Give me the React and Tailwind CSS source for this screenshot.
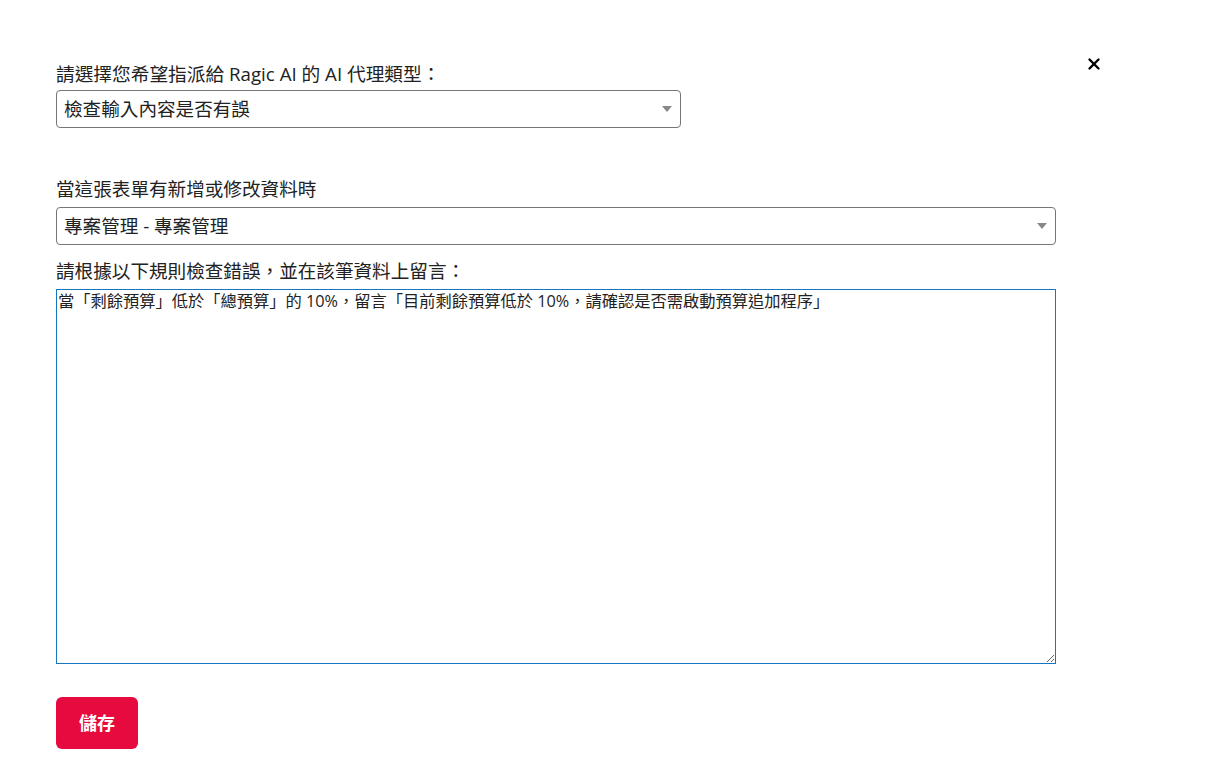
import { X } from 'lucide-react';

const font = { fontFamily: '"Open Sans", "Noto Sans CJK TC", sans-serif' };

function Caret() {
  return (
    <svg width="10" height="6" viewBox="0 0 10 6" className="shrink-0">
      <path d="M0 0 H10 L5 6 Z" fill="#888" />
    </svg>
  );
}

function FakeSelect({ value, className }) {
  return (
    <div
      className={`flex items-center justify-between h-[38px] pl-[7px] pr-[8px] border border-[#767676] rounded-[4px] bg-white text-[18.6px] text-[#222] ${className}`}
    >
      <span className="leading-none">{value}</span>
      <Caret />
    </div>
  );
}

export default function App() {
  return (
    <div className="relative w-[1228px] h-[765px] bg-white text-[#222]" style={font}>
      {/* close */}
      <button className="absolute left-[1085px] top-[55px] text-black">
        <X size={18} strokeWidth={3.2} />
      </button>

      <div className="pl-[56px] pt-[63px] flex flex-col">
        <label className="text-[18.7px] leading-[22px]">請選擇您希望指派給 Ragic AI 的 AI 代理類型：</label>
        <FakeSelect value="檢查輸入內容是否有誤" className="mt-[5px] w-[625px]" />

        <label className="mt-[50px] text-[18.6px] leading-[22px]">當這張表單有新增或修改資料時</label>
        <FakeSelect value="專案管理 - 專案管理" className="mt-[7px] w-[1000px]" />

        <label className="mt-[15px] text-[18.6px] leading-[22px]">請根據以下規則檢查錯誤，並在該筆資料上留言：</label>
        <textarea
          className="mt-[7px] w-[1000px] h-[375px] border border-[#1677c0] px-[1px] py-[1px] text-[16.25px] leading-[20px] text-[#222] outline-none resize"
          style={font}
          defaultValue="當「剩餘預算」低於「總預算」的 10%，留言「目前剩餘預算低於 10%，請確認是否需啟動預算追加程序」"
        />

        <div className="mt-[33px]">
          <button className="w-[82px] h-[52px] rounded-[6px] bg-[#e70a3e] text-white text-[18px] font-semibold">
            儲存
          </button>
        </div>
      </div>
    </div>
  );
}
